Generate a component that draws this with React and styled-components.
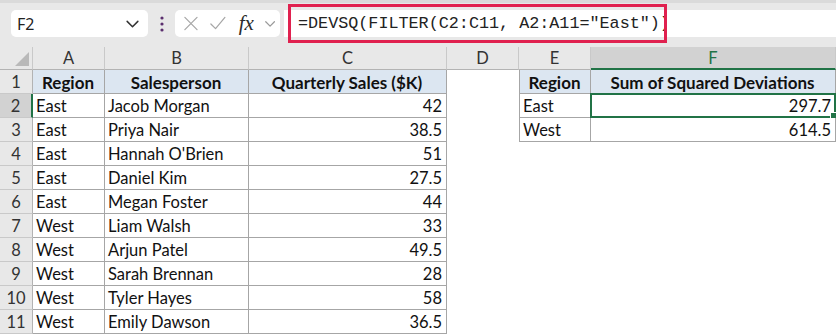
import React from 'react';
import styled, { createGlobalStyle } from 'styled-components';

const Global = createGlobalStyle`
  html, body { margin: 0; padding: 0; background: #fff; }
  body { font-family: Lato, "Liberation Sans", sans-serif; }
  * { box-sizing: border-box; }
`;

const Page = styled.div`
  width: 836px;
  height: 336px;
  overflow: hidden;
  background: #fff;
  display: flex;
  flex-direction: column;
`;

const TopBar = styled.div`
  height: 47px;
  flex: none;
  background: #e8e8e8;
  border-top: 3px solid #dadada;
  display: flex;
  align-items: flex-start;
  padding: 7px 0 0 11px;
`;

const NameBox = styled.div`
  width: 137px;
  height: 27px;
  background: #fff;
  border-radius: 5px;
  display: flex;
  align-items: center;
  justify-content: space-between;
  padding: 0 8px 0 6px;
  font-family: "Noto Sans", "Open Sans", sans-serif;
  font-size: 16px;
  color: #222;
`;

const Dots = styled.div`
  width: 27px;
  height: 27px;
  display: flex;
  align-items: center;
  justify-content: center;
`;

const FxBox = styled.div`
  width: 105px;
  height: 27px;
  background: #fff;
  border-radius: 5px;
  display: flex;
  align-items: center;
  padding: 0 4px 0 8px;
  gap: 10px;
`;

const Fx = styled.span`
  font-family: "Liberation Serif", serif;
  font-style: italic;
  font-size: 21px;
  color: #2b2b2b;
  margin-left: 2px;
  line-height: 1;
`;

const FormulaInput = styled.div`
  margin-left: 4px;
  flex: 1;
  height: 27px;
  background: #fff;
  display: flex;
  align-items: center;
  padding-left: 4px;
`;

const FormulaText = styled.span`
  height: 39px;
  border: 3px solid #e0214f;
  display: flex;
  align-items: center;
  padding: 0 0 0 7px;
  width: 379px;
  font-family: "Liberation Mono", monospace;
  font-size: 16.75px;
  color: #222;
  white-space: nowrap;
  overflow: hidden;
`;

const Grid = styled.div`
  display: grid;
  grid-template-columns: 33px 72px 144px 198px 72px 72px 245px;
  grid-template-rows: 23px repeat(11, 24px);
  flex: none;
`;

const ColHead = styled.div`
  background: ${p => (p.$sel ? '#d2d2d2' : '#e8e8e8')};
  color: ${p => (p.$sel ? '#217346' : '#333')};
  border-right: 1px solid #c9c9c9;
  border-bottom: ${p => (p.$sel ? '2px solid #217346' : '1px solid #b3b3b3')};
  display: flex;
  align-items: center;
  justify-content: center;
  font-size: 16.5px;
  padding-top: ${p => (p.$sel ? '1px' : '0')};
`;

const Corner = styled.div`
  background: #e8e8e8;
  border-right: 1px solid #c9c9c9;
  border-bottom: 1px solid #b3b3b3;
  position: relative;
  svg { position: absolute; right: 3px; bottom: 3px; }
`;

const RowHead = styled.div`
  background: ${p => (p.$sel ? '#d2d2d2' : '#e8e8e8')};
  color: #333;
  border-right: ${p => (p.$sel ? '2px solid #217346' : '1px solid #b3b3b3')};
  border-bottom: 1px solid #c9c9c9;
  display: flex;
  align-items: center;
  justify-content: center;
  font-size: 16.5px;
`;

const Cell = styled.div`
  position: relative;
  background: ${p => (p.$head ? '#dce6f1' : '#fff')};
  border-right: ${p => (p.$edge ? '1px solid #a6a6a6' : 'none')};
  border-bottom: ${p => (p.$edge ? '1px solid #a6a6a6' : 'none')};
  border-left: ${p => (p.$lead ? '1px solid #a6a6a6' : 'none')};
  display: flex;
  align-items: center;
  justify-content: ${p => (p.$head ? 'center' : p.$num ? 'flex-end' : 'flex-start')};
  padding: 1px 4px 0 3px;
  font-size: ${p => (p.$head ? '17px' : '16.5px')};
  font-weight: ${p => (p.$head ? 700 : 400)};
  color: #111;
  white-space: nowrap;
`;

const Selection = styled.div`
  position: absolute;
  left: -1px;
  top: -1px;
  right: -1px;
  bottom: -1px;
  border: 2px solid #217346;
  pointer-events: none;
  &::after {
    content: '';
    position: absolute;
    right: -4px;
    bottom: -4px;
    width: 6px;
    height: 6px;
    background: #217346;
    border: 1px solid #fff;
  }
`;

const Chevron = ({ size = 14, color = '#444' }) => (
  <svg width={size} height={size} viewBox="0 0 14 14" fill="none">
    <path d="M2 5 L7 10 L12 5" stroke={color} strokeWidth="1.4" strokeLinecap="round" strokeLinejoin="round" />
  </svg>
);

const data = [
  ['East', 'Jacob Morgan', '42'],
  ['East', 'Priya Nair', '38.5'],
  ['East', "Hannah O'Brien", '51'],
  ['East', 'Daniel Kim', '27.5'],
  ['East', 'Megan Foster', '44'],
  ['West', 'Liam Walsh', '33'],
  ['West', 'Arjun Patel', '49.5'],
  ['West', 'Sarah Brennan', '28'],
  ['West', 'Tyler Hayes', '58'],
  ['West', 'Emily Dawson', '36.5'],
];

const summary = [
  ['East', '297.7'],
  ['West', '614.5'],
];

export default function App() {
  const cols = ['A', 'B', 'C', 'D', 'E', 'F'];
  const rows = [];
  for (let r = 1; r <= 11; r++) {
    const d = data[r - 2];
    const s = summary[r - 2];
    rows.push(<RowHead key={'h' + r} $sel={r === 2}>{r}</RowHead>);
    if (r === 1) {
      rows.push(<Cell key="a1" $head $edge>Region</Cell>);
      rows.push(<Cell key="b1" $head $edge>Salesperson</Cell>);
      rows.push(<Cell key="c1" $head $edge>Quarterly Sales ($K)</Cell>);
      rows.push(<Cell key="d1" />);
      rows.push(<Cell key="e1" $head $edge $lead>Region</Cell>);
      rows.push(<Cell key="f1" $head $edge>Sum of Squared Deviations</Cell>);
    } else {
      rows.push(<Cell key={'a' + r} $edge>{d[0]}</Cell>);
      rows.push(<Cell key={'b' + r} $edge>{d[1]}</Cell>);
      rows.push(<Cell key={'c' + r} $edge $num>{d[2]}</Cell>);
      rows.push(<Cell key={'d' + r} />);
      if (s) {
        rows.push(<Cell key={'e' + r} $edge $lead>{s[0]}</Cell>);
        rows.push(
          <Cell key={'f' + r} $edge $num>
            {s[1]}
            {r === 2 && <Selection />}
          </Cell>
        );
      } else {
        rows.push(<Cell key={'e' + r} />);
        rows.push(<Cell key={'f' + r} />);
      }
    }
  }
  return (
    <Page>
      <Global />
      <TopBar>
        <NameBox>
          <span>F2</span>
          <Chevron size={15} color="#333" />
        </NameBox>
        <Dots>
          <svg width="4" height="16" viewBox="0 0 4 16">
            <circle cx="2" cy="2" r="1.6" fill="#5b2f6e" />
            <circle cx="2" cy="8" r="1.6" fill="#5b2f6e" />
            <circle cx="2" cy="14" r="1.6" fill="#5b2f6e" />
          </svg>
        </Dots>
        <FxBox>
          <svg width="17" height="17" viewBox="0 0 17 17" fill="none">
            <path d="M2 2 L15 15 M15 2 L2 15" stroke="#a6a6a6" strokeWidth="1.3" strokeLinecap="round" />
          </svg>
          <svg width="19" height="17" viewBox="0 0 19 17" fill="none">
            <path d="M2 9 L7 14 L17 2" stroke="#a6a6a6" strokeWidth="1.3" strokeLinecap="round" strokeLinejoin="round" />
          </svg>
          <Fx>fx</Fx>
          <Chevron size={13} color="#9a9a9a" />
        </FxBox>
        <FormulaInput>
          <FormulaText>=DEVSQ(FILTER(C2:C11, A2:A11="East"))</FormulaText>
        </FormulaInput>
      </TopBar>
      <Grid>
        <Corner>
          <svg width="14" height="14" viewBox="0 0 14 14">
            <path d="M14 0 L14 14 L0 14 Z" fill="#b9b9b9" />
          </svg>
        </Corner>
        {cols.map(c => (
          <ColHead key={c} $sel={c === 'F'}>{c}</ColHead>
        ))}
        {rows}
      </Grid>
    </Page>
  );
}
